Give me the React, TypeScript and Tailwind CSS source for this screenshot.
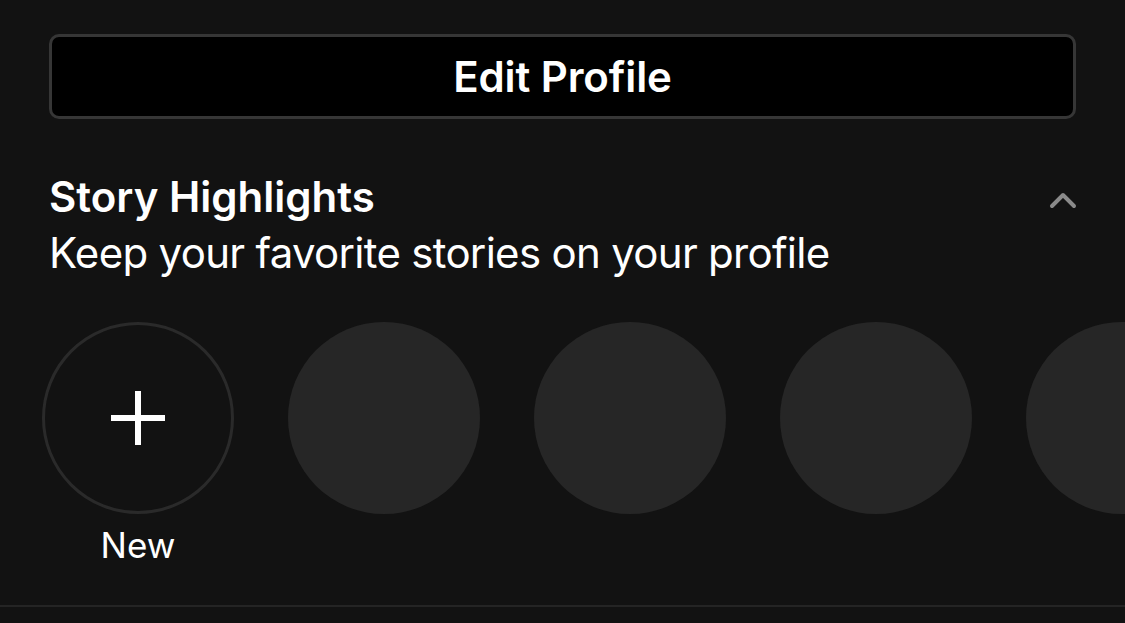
import React from "react";

export default function App() {
  return (
    <div
      className="w-[1125px] h-[623px] bg-[#121212] text-white overflow-hidden flex flex-col"
      style={{ fontFamily: "Inter, 'Noto Sans', sans-serif" }}
    >
      <div className="px-[49px] pt-[34px]">
        <button className="w-full h-[85px] bg-black border-[3px] border-[#363636] rounded-[10px] text-[42px] font-semibold tracking-[-0.1px] flex items-center justify-center">
          Edit Profile
        </button>
      </div>
      <div className="px-[49px] pt-[53px] flex items-start justify-between">
        <div className="flex flex-col">
          <div className="text-[42px] font-semibold leading-[50px] tracking-[0px]">Story Highlights</div>
          <div className="text-[42px] font-normal leading-[50px] mt-[6px] tracking-[-0.7px]">
            Keep your favorite stories on your profile
          </div>
        </div>
        <svg width="28" height="18" viewBox="0 0 28 18" className="mt-[19px] mr-[-1px]">
          <path d="M3 15 L14 4 L25 15" stroke="#8a8a8a" strokeWidth="4" fill="none" strokeLinecap="round" strokeLinejoin="round" />
        </svg>
      </div>
      <div className="flex gap-[54px] pl-[42px] pt-[44px] flex-1">
        <div className="flex flex-col items-center shrink-0">
          <div className="w-[192px] h-[192px] rounded-full border-[3px] border-[#2a2a2a] flex items-center justify-center">
            <svg width="56" height="56" viewBox="0 0 56 56">
              <path d="M28 1 V55 M1 28 H55" stroke="white" strokeWidth="6" fill="none" />
            </svg>
          </div>
          <div className="text-[35px] leading-[40px] mt-[11px]">New</div>
        </div>
        <div className="w-[192px] h-[192px] rounded-full bg-[#262626] shrink-0" />
        <div className="w-[192px] h-[192px] rounded-full bg-[#262626] shrink-0" />
        <div className="w-[192px] h-[192px] rounded-full bg-[#262626] shrink-0" />
        <div className="w-[192px] h-[192px] rounded-full bg-[#262626] shrink-0" />
      </div>
      <div className="h-[2px] bg-[#242424] mb-[16px]" />
    </div>
  );
}
